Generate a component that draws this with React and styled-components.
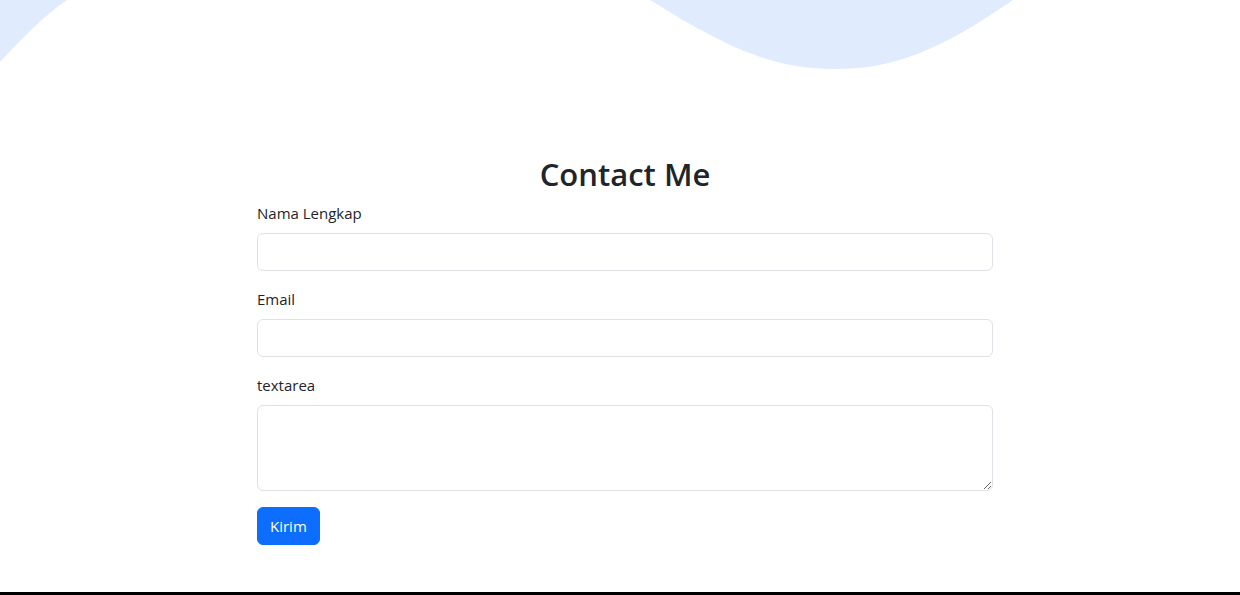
import React from "react";
import styled, { createGlobalStyle } from "styled-components";

const GlobalStyle = createGlobalStyle`
  * {
    box-sizing: border-box;
  }
  body {
    margin: 0;
    background: #fff;
    color: #212529;
    font-family: "Open Sans", "Noto Sans", sans-serif;
    font-size: 16px;
    line-height: 24px;
  }
`;

const Page = styled.div`
  height: 595px;
  display: flex;
  flex-direction: column;
  overflow: hidden;
`;

const Wave = styled.svg`
  display: block;
  width: 1240px;
  height: 70px;
  flex-shrink: 0;
`;

const Main = styled.main`
  flex: 1;
  padding: 85px 0 0 257px;
`;

const Form = styled.form`
  width: 736px;
`;

const Title = styled.h2`
  margin: 0 0 8px;
  text-align: center;
  font-size: 31px;
  font-weight: 600;
  line-height: 38px;
`;

const Field = styled.div`
  margin-bottom: 16px;
`;

const Label = styled.label`
  display: block;
  margin-bottom: 8px;
  font-size: 15px;
  line-height: 24px;
`;

const Input = styled.input`
  display: block;
  width: 100%;
  height: 38px;
  padding: 6px 12px;
  font: inherit;
  color: #212529;
  background: #fff;
  border: 1px solid #dee2e6;
  border-radius: 6px;
  outline: none;
`;

const TextArea = styled.textarea`
  display: block;
  width: 100%;
  height: 86px;
  padding: 6px 12px;
  font: inherit;
  color: #212529;
  border: 1px solid #dee2e6;
  border-radius: 6px;
  resize: vertical;
  outline: none;
`;

const Button = styled.button`
  display: block;
  height: 38px;
  padding: 0 12px;
  font: inherit;
  font-size: 15px;
  color: #fff;
  background: #0d6efd;
  border: 1px solid #0d6efd;
  border-radius: 6px;
  cursor: pointer;
`;

const Footer = styled.footer`
  height: 3px;
  background: #000;
  flex-shrink: 0;
`;

const App = () => {
  return (
    <>
      <GlobalStyle />
      <Page>
        <Wave viewBox="0 0 1240 70" preserveAspectRatio="none">
          <path d="M0,-10 L0,62 C24,36 46,14 67,0 L67,-10 Z" fill="#e0ebfd" />
          <path
            d="M650,0 C730,50 775,69 835,69 C895,69 940,50 1013,0 Z"
            fill="#e0ebfd"
          />
        </Wave>
        <Main>
          <Form onSubmit={(e) => e.preventDefault()}>
            <Title>Contact Me</Title>
            <Field>
              <Label htmlFor="nama">Nama Lengkap</Label>
              <Input id="nama" type="text" />
            </Field>
            <Field>
              <Label htmlFor="email">Email</Label>
              <Input id="email" type="email" />
            </Field>
            <Field>
              <Label htmlFor="pesan">textarea</Label>
              <TextArea id="pesan" rows={3} />
            </Field>
            <Button type="submit">Kirim</Button>
          </Form>
        </Main>
        <Footer />
      </Page>
    </>
  );
};

export default App;
